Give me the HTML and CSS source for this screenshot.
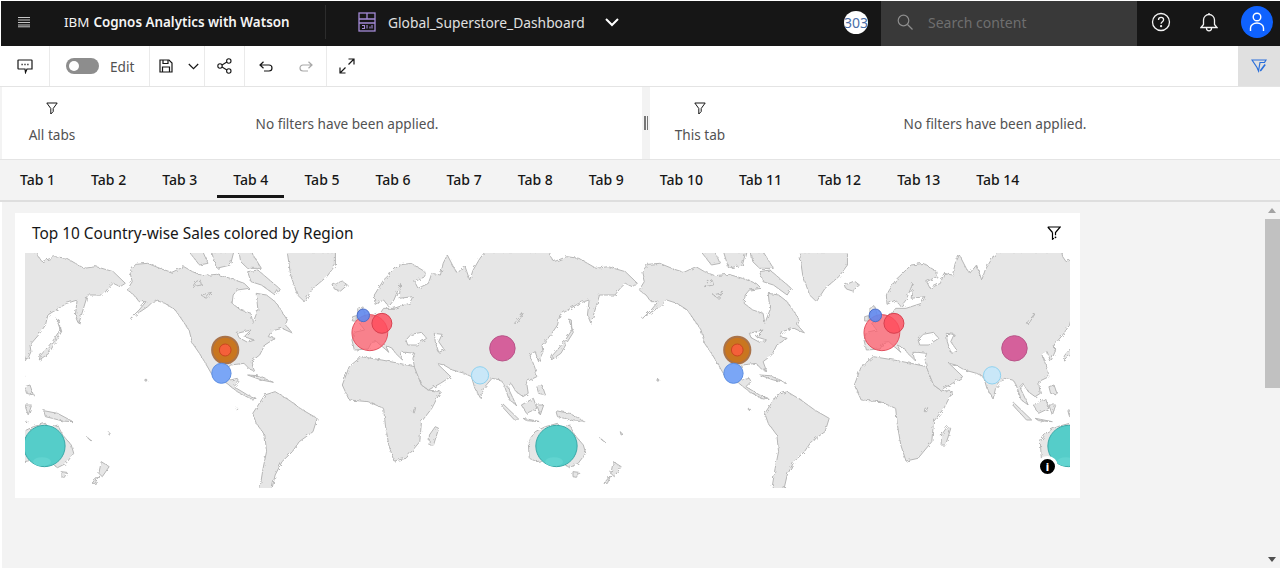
FILE: index.html
```html
<!DOCTYPE html>
<html lang="en">
<head>
  <meta charset="UTF-8" />
  <title>IBM Cognos Analytics with Watson</title>
  <link rel="stylesheet" href="styles.css">
</head>
<body>
  <header class="topbar">
    <button class="top-btn menu-btn" aria-label="Menu">
      <svg width="14" height="12" viewBox="0 0 14 12"><path d="M1 1.500h12M1 4h12M1 6.500h12M1 9h12M1 10.800h12" stroke="#c6c6c6" stroke-width="1"/></svg>
    </button>
    <div class="app-title">IBM <strong>Cognos Analytics with Watson</strong></div>
    <div class="switcher">
      <svg width="18" height="20" viewBox="0 0 18 20" fill="none" stroke="#a48ad6" stroke-width="1.300"><rect x="1" y="1" width="16" height="18"/><path d="M1 7h16M9 1v6M1 11h16"/><path d="M4 16.500h2.500v-3H4M9 13v3.500M12 16.500v-2M14 16.500v-3.500" stroke-width="1.100"/></svg>
      <span class="switcher-name">Global_Superstore_Dashboard</span>
      <svg class="switcher-chevron" width="14" height="9" viewBox="0 0 14 9" fill="none" stroke="#fff" stroke-width="2"><path d="M1 1l6 6 6-6"/></svg>
    </div>
    <div class="top-right">
      <div class="badge"><span>303</span></div>
      <div class="search">
        <svg width="16" height="16" viewBox="0 0 16 16" fill="none" stroke="#8d8d8d" stroke-width="1.200"><circle cx="6.500" cy="6.500" r="5.300"/><path d="M10.500 10.500l5 5"/></svg>
        <span>Search content</span>
      </div>
      <button class="top-btn" aria-label="Help">
        <svg width="20" height="20" viewBox="0 0 20 20" fill="none" stroke="#f4f4f4" stroke-width="1.300"><circle cx="10" cy="10" r="8.500"/><path d="M7.500 8c0-1.600 1.100-2.600 2.600-2.600S12.600 6.400 12.600 7.800c0 1.800-2.500 2-2.500 4"/><circle cx="10.100" cy="14.200" r=".5"/></svg>
      </button>
      <button class="top-btn" aria-label="Notifications">
        <svg width="18" height="20" viewBox="0 0 18 20" fill="none" stroke="#f4f4f4" stroke-width="1.300"><path d="M1 15.500l2.500-3V8a5.500 5.500 0 0 1 11 0v4.500l2.500 3z"/><path d="M6.500 15.500v.8a2.500 2.500 0 0 0 5 0v-.8M9 1v1.500"/></svg>
      </button>
      <div class="avatar-wrap">
        <div class="avatar">
          <svg width="16" height="20" viewBox="0 0 16 20" fill="none" stroke="#fff" stroke-width="1.400"><circle cx="8" cy="5" r="3.800"/><path d="M1.500 19v-3a6.500 5 0 0 1 13 0v3"/></svg>
        </div>
      </div>
    </div>
  </header>

  <nav class="toolbar">
    <div class="tool-group w-comment">
      <svg width="16" height="16" viewBox="0 0 16 16" fill="none" stroke="#161616" stroke-width="1.200"><path d="M1.500 2h13a.5.5 0 0 1 .5.500v8.500H10l-1.500 3.500L8 11H1.500a.5.5 0 0 1-.5-.5v-8a.5.5 0 0 1 .5-.5z"/><path d="M4.500 6.500h1.200M7.400 6.500h1.200M10.300 6.500h1.200" stroke-width="1.600"/></svg>
    </div>
    <div class="tool-group w-edit">
      <span class="toggle"><span class="knob"></span></span>
      <span class="edit-label">Edit</span>
    </div>
    <div class="tool-group w-save">
      <svg width="14" height="14" viewBox="0 0 14 14" fill="none" stroke="#161616" stroke-width="1.200"><path d="M1 1h9l3 3v9H1z"/><path d="M4 1v3.500h5V1M3.500 13V8h7v5"/></svg>
      <svg width="11" height="7" viewBox="0 0 11 7" fill="none" stroke="#161616" stroke-width="1.200"><path d="M.8 1l4.700 4.700L10.200 1"/></svg>
    </div>
    <div class="tool-group w-share">
      <svg width="15" height="16" viewBox="0 0 15 16" fill="none" stroke="#161616" stroke-width="1.100"><circle cx="11.800" cy="3" r="2.200"/><circle cx="3" cy="8" r="2.200"/><circle cx="11.800" cy="13" r="2.200"/><path d="M5 7l4.900-3M5 9l4.900 3"/></svg>
    </div>
    <div class="tool-group w-history">
      <svg width="14" height="11" viewBox="0 0 14 11" fill="none" stroke="#161616" stroke-width="1.200"><path d="M4.500 .8L1 4l3.500 3.200M1 4h9a3 3 0 0 1 0 6H5"/></svg>
      <svg width="14" height="11" viewBox="0 0 14 11" fill="none" stroke="#a8a8a8" stroke-width="1.200"><path d="M9.500 .8L13 4 9.500 7.200M13 4H4a3 3 0 0 0 0 6h5"/></svg>
    </div>
    <div class="tool-group w-expand">
      <svg width="16" height="16" viewBox="0 0 16 16" fill="none" stroke="#161616" stroke-width="1.200"><path d="M9.500 1H15v5.500M15 1L9.500 6.500M6.500 15H1V9.500M1 15l5.500-5.500"/></svg>
    </div>
    <div class="filter-toggle">
      <svg width="16" height="16" viewBox="0 0 16 16" fill="none" stroke="#2a6fdb" stroke-width="1.200"><path d="M1 2h14l-1.500 2.500H9L7.500 13 6 9.500z"/><path d="M9 12l4.500-6 1.300 1-4.500 6-1.800.6z" fill="#2a6fdb" stroke="none"/></svg>
    </div>
  </nav>

  <section class="filters">
    <div class="filter-panel panel-left">
      <div class="filter-scope">
        <svg width="12" height="13" viewBox="0 0 12 13" fill="none" stroke="#161616"><path d="M.8 1h10.400L7.200 6.500v3L4.800 12V6.500z"/></svg>
        <span>All tabs</span>
      </div>
      <p class="filter-msg">No filters have been applied.</p>
    </div>
    <div class="splitter"><span></span></div>
    <div class="filter-panel panel-right">
      <div class="filter-scope">
        <svg width="12" height="13" viewBox="0 0 12 13" fill="none" stroke="#161616"><path d="M.8 1h10.400L7.200 6.500v3L4.800 12V6.500z"/></svg>
        <span>This tab</span>
      </div>
      <p class="filter-msg">No filters have been applied.</p>
    </div>
  </section>

  <div class="tabs">
    <a class="tab">Tab 1</a>
    <a class="tab">Tab 2</a>
    <a class="tab">Tab 3</a>
    <a class="tab active">Tab 4</a>
    <a class="tab">Tab 5</a>
    <a class="tab">Tab 6</a>
    <a class="tab">Tab 7</a>
    <a class="tab">Tab 8</a>
    <a class="tab">Tab 9</a>
    <a class="tab">Tab 10</a>
    <a class="tab">Tab 11</a>
    <a class="tab">Tab 12</a>
    <a class="tab">Tab 13</a>
    <a class="tab">Tab 14</a>
  </div>

  <main class="board">
    <div class="canvas">
      <article class="widget">
        <div class="widget-head">
          <h2>Top 10 Country-wise Sales colored by Region</h2>
          <svg width="14" height="14" viewBox="0 0 14 14" fill="none" stroke="#000" stroke-width="1.200"><path d="M.8 1h12.400L8.500 6.500v2.800M5.500 6.500L.8 1M5.500 6.500v6.700l1.500-1"/><circle cx="8.500" cy="11.300" r=".9" fill="#000" stroke="none"/></svg>
        </div>
        <div class="map">
          <svg class="map-svg" viewBox="43.600 24 3034.700 705" preserveAspectRatio="none">
            <defs>
              <filter id="rough" x="-2%" y="-2%" width="104%" height="104%">
                <feTurbulence type="fractalNoise" baseFrequency=".09" numOctaves="3" seed="4"/>
                <feDisplacementMap in="SourceGraphic" scale="11"/>
              </filter>
              <g id="land">
                <!-- North America -->
                <path d="M348,80 L365,58 L400,55 L440,72 L470,82 L505,65 L530,80 L560,92 L600,88 L640,100 L680,115 L695,130 L660,135 L648,150 L645,175 L670,195 L700,205 L705,235 L720,195 L715,145 L745,150 L770,170 L790,200 L805,225 L800,240 L820,264 L790,250 L760,258 L750,275 L770,280 L740,300 L725,330 L700,350 L710,378 L695,372 L680,355 L640,360 L625,380 L640,405 L660,400 L665,410 L650,425 L690,450 L715,460 L700,462 L660,440 L630,415 L590,395 L565,350 L550,325 L530,295 L520,255 L500,225 L480,195 L450,175 L420,165 L400,185 L350,220 L375,195 L395,170 L375,170 L360,150 L340,135 L355,110 Z"/>
                <path d="M520,20 L560,20 L575,55 L550,60 Z M585,20 L650,20 L640,60 L600,70 Z M665,20 L700,20 L730,70 L690,70 L670,50 Z M540,110 L552,104 L556,120 L530,125 Z M690,80 L720,75 L782,130 L770,150 L730,120 L700,110 Z M555,150 L585,142 L570,160 Z"/>
                <path d="M690,390 L720,392 L765,412 L730,405 Z"/>
                <!-- Greenland, Iceland -->
                <path d="M805,20 L945,20 L945,60 L920,95 L880,130 L855,170 L835,150 L815,90 Z"/>
                <path d="M938,120 L965,108 L980,120 L960,138 L942,132 Z"/>
                <!-- South America -->
                <path d="M705,505 L740,450 L770,440 L810,465 L850,495 L892,520 L880,560 L840,590 L820,620 L790,650 L770,690 L760,735 L725,735 L735,670 L745,620 L740,570 L715,535 Z"/>
                <!-- Africa -->
                <path d="M965,420 L985,365 L1020,335 L1080,345 L1130,355 L1175,365 L1195,420 L1215,435 L1250,440 L1225,490 L1195,530 L1190,590 L1150,640 L1115,648 L1100,600 L1090,540 L1085,490 L1040,470 L985,465 Z"/>
                <path d="M1235,545 L1245,550 L1230,600 L1217,600 L1218,570 Z"/>
                <!-- Eurasia, runs past the seam of the repeat -->
                <path d="M1000,315 L993,285 L1000,262 L1030,255 L1015,235 L1050,215 L1075,205 L1085,190 L1115,190 L1160,175 L1170,155 L1130,160 L1135,115 L1115,165 L1100,185 L1085,165 L1060,178 L1058,150 L1085,105 L1130,60 L1165,55 L1205,80 L1205,95 L1175,110 L1185,130 L1215,115 L1225,85 L1250,90 L1258,55 L1270,30 L1290,70 L1300,85 L1320,60 L1335,105 L1345,75 L1365,40 L1380,20 L1567,20 L1570,35 L1580,50 L1617,35 L1652,40 L1677,55 L1702,70 L1737,65 L1787,80 L1822,115 L1807,125 L1787,115 L1772,130 L1757,150 L1712,150 L1702,185 L1687,235 L1677,210 L1682,165 L1652,175 L1612,200 L1597,210 L1590,240 L1570,270 L1545,300 L1548,320 L1535,350 L1525,320 L1510,330 L1525,370 L1530,395 L1500,410 L1505,445 L1490,455 L1470,440 L1455,415 L1445,425 L1470,480 L1450,465 L1435,420 L1425,405 L1400,400 L1375,430 L1368,462 L1350,430 L1340,395 L1320,385 L1285,375 L1260,360 L1240,355 L1280,395 L1250,415 L1215,435 L1195,420 L1175,368 L1170,340 L1175,325 L1150,322 L1135,322 L1140,345 L1120,325 L1110,310 L1090,300 L1100,322 L1065,290 L1050,292 L1040,312 Z"/>
                <!-- Japan and the Islands -->
                <path d="M1622,222 L1630,225 L1632,255 L1610,290 L1575,332 L1572,345 L1600,325 L1622,285 L1636,262 Z"/>
                <path d="M1010,190 L1025,185 L1035,225 L1010,225 Z M995,215 L1006,212 L1005,228 L995,228 Z"/>
                <path d="M1530,425 L1545,420 L1555,450 L1535,445 Z M1485,480 L1520,460 L1530,490 L1500,505 Z M1430,475 L1480,525 L1465,525 L1425,480 Z M1490,520 L1540,530 L1500,527 Z M1530,480 L1550,480 L1540,510 Z"/>
                <!-- Oceania -->
                <path d="M1505,590 L1525,560 L1555,545 L1590,535 L1600,550 L1625,540 L1640,570 L1665,600 L1672,625 L1650,655 L1625,668 L1600,650 L1570,640 L1530,650 L1508,640 Z"/>
                <path d="M1585,497 L1625,505 L1670,530 L1640,528 L1610,520 L1590,515 Z M1635,680 L1652,682 L1645,697 L1635,695 Z"/>
                <path d="M1752,650 L1775,665 L1755,695 L1745,685 Z M1745,690 L1735,715 L1725,715 Z"/>
                <path d="M392,403 h5 v5 h-5 Z M657,490 h4 v4 h-4 Z M1712,578 L1727,590 L1720,586 Z M1772,560 L1780,568 L1775,570 Z"/>
                <!-- Inland water -->
                <path class="water" d="M1150,285 L1165,268 L1195,262 L1210,280 L1180,300 L1155,300 Z M1232,265 L1255,268 L1245,290 L1262,315 L1245,322 L1235,290 Z M1465,235 L1490,205 L1485,215 L1472,235 Z M660,265 L700,255 L680,275 L710,285 L690,292 L665,278 Z M1170,490 L1178,488 L1175,500 L1168,500 Z"/>
              </g>
              <g id="bubbles">
                <ellipse cx="1587" cy="603" rx="60" ry="62" fill="#55cdc9" stroke="#3aa9a8"/>
                <ellipse cx="1580" cy="650" rx="26" ry="13" fill="#62d4d0"/>
                <ellipse cx="625" cy="315" rx="38" ry="40" fill="#c9761f" stroke="#a9734a" stroke-width="2"/>
                <ellipse cx="625" cy="315" rx="17" ry="18" fill="#f4603a" stroke="#c9461f"/>
                <ellipse cx="614" cy="385" rx="28" ry="30" fill="#7aa6f6" stroke="#5c8ee2"/>
                <ellipse cx="1045" cy="263" rx="52" ry="54" fill="#ff5a6a" fill-opacity=".72" stroke="#e2505f"/>
                <ellipse cx="1080" cy="235" rx="29" ry="30" fill="#ff4a5a" fill-opacity=".8" stroke="#d8404f"/>
                <ellipse cx="1026" cy="211" rx="18" ry="19" fill="#6088ee" fill-opacity=".9" stroke="#4d6fc8"/>
                <ellipse cx="1430" cy="310" rx="37" ry="38" fill="#d5609b" stroke="#b85488"/>
                <ellipse cx="1365" cy="391" rx="25" ry="26" fill="#c9e7f8" stroke="#8fd2f0"/>
              </g>
            </defs>
            <g class="land" filter="url(#rough)">
              <use href="#land" x="-1487"/>
              <use href="#land"/>
              <use href="#land" x="1487"/>
            </g>
            <g>
              <use href="#bubbles" x="-1487"/>
              <use href="#bubbles"/>
              <use href="#bubbles" x="1487"/>
            </g>
          </svg>
          <span class="info-dot"><span>i</span></span>
        </div>
      </article>
    </div>
    <div class="scrollbar">
      <span class="arrow-up"></span>
      <span class="thumb"></span>
      <span class="arrow-down"></span>
    </div>
  </main>
</body>
</html>
```

FILE: styles.css
```css
* {
  box-sizing: border-box;
  font-family: 'Noto Sans', 'Open Sans', sans-serif;
}

html, body {
  margin: 0;
  padding: 0;
  height: 568px;
  overflow: hidden;
  background: #fff;
}

button {
  border: none;
  background: none;
  padding: 0;
}

/* top bar */
.topbar {
  display: flex;
  align-items: center;
  height: 45px;
  margin: 1px 0 0 1px;
  background: #161616;
  color: #f4f4f4;
  font-size: 14px;
}

.top-btn {
  display: flex;
  align-items: center;
  justify-content: center;
  width: 48px;
  height: 45px;
  padding-bottom: 3px;
}

.menu-btn {
  width: 45px;
}

.app-title {
  display: flex;
  align-items: center;
  gap: 4px;
  width: 280px;
  height: 34px;
  margin-bottom: 3px;
  padding-left: 18px;
  border-right: 1px solid #2c2c2c;
  font-size: 13.400px;
  white-space: nowrap;
}

.app-title strong {
  font-weight: 600;
}

.switcher {
  display: flex;
  align-items: center;
  margin-bottom: 3px;
  padding-left: 32px;
}

.switcher-name {
  margin-left: 12px;
  color: #e0e0e0;
  font-size: 13.800px;
}

.switcher-chevron {
  margin-left: 20px;
}

.top-right {
  display: flex;
  align-items: center;
  margin-left: auto;
}

.badge {
  display: flex;
  justify-content: center;
  align-items: center;
  width: 24px;
  height: 23px;
  margin-right: 13px;
  margin-bottom: 3px;
  border-radius: 50%;
  background: #fff;
  overflow: hidden;
  color: #4a6ea8;
  font-size: 14px;
}

.search {
  display: flex;
  align-items: center;
  gap: 15px;
  width: 256px;
  height: 45px;
  padding: 0 0 3px 16px;
  background: #393939;
  color: #6f6f6f;
  font-size: 14px;
}

.avatar-wrap {
  display: flex;
  justify-content: center;
  width: 47px;
  margin-bottom: 3px;
}

.avatar {
  display: flex;
  align-items: center;
  justify-content: center;
  width: 32px;
  height: 32px;
  border-radius: 50%;
  background: #0f62fe;
}

/* toolbar */
.toolbar {
  display: flex;
  height: 41px;
  background: #fff;
  border-bottom: 1px solid #e4e4e4;
}

.tool-group {
  display: flex;
  align-items: center;
  justify-content: center;
  height: 100%;
  border-right: 1px solid #eaeaea;
}

.w-comment { width: 50px; }
.w-edit { width: 100px; justify-content: flex-start; padding-left: 16px; }
.w-save { width: 55px; gap: 15px; padding-left: 3px; }
.w-share { width: 40px; }
.w-history { width: 82px; gap: 26px; }
.w-expand { width: 40px; border-right: none; }

.toggle {
  display: block;
  width: 33px;
  height: 16px;
  padding: 3px;
  border-radius: 8px;
  background: #8d8d8d;
}

.knob {
  display: block;
  width: 10px;
  height: 10px;
  border-radius: 50%;
  background: #fff;
}

.edit-label {
  margin-left: 11px;
  color: #525252;
  font-size: 13.600px;
}

.filter-toggle {
  display: flex;
  align-items: center;
  justify-content: center;
  width: 42px;
  margin-left: auto;
  background: #e0e0e0;
}

/* filter strip */
.filters {
  display: flex;
  height: 73px;
  padding-left: 2px;
  border-bottom: 1px solid #e4e4e4;
  background: #f3f3f3;
}

.filter-panel {
  display: flex;
  background: #fff;
}

.panel-left {
  width: 640px;
}

.panel-right {
  flex: 1;
}

.filter-scope {
  display: flex;
  flex-direction: column;
  align-items: center;
  gap: 10px;
  width: 100px;
  padding-top: 15px;
  color: #525252;
  font-size: 13.600px;
}

.filter-msg {
  width: 490px;
  margin: 27px 0 0;
  text-align: center;
  color: #525252;
  font-size: 13.600px;
}

.splitter {
  display: flex;
  align-items: center;
  justify-content: center;
  width: 8px;
}

.splitter span {
  display: block;
  width: 4px;
  height: 14px;
  border-left: 2px solid #777;
  border-right: 1px solid #777;
}

/* tabs */
.tabs {
  display: flex;
  height: 42px;
  padding-left: 2px;
  background: #f3f3f3;
  border-bottom: 2px solid #dedede;
}

.tab {
  height: 38px;
  margin: 0 2px;
  padding: 10px 16px 0;
  color: #161616;
  font-size: 14px;
  font-weight: 500;
}

.tab.active {
  border-bottom: 3px solid #161616;
}

/* board */
.board {
  display: flex;
  height: 366px;
  margin-left: 2px;
  background: #f3f3f3;
}

.canvas {
  flex: 1;
  padding: 11px 13px;
}

.widget {
  width: 1065px;
  height: 285px;
  background: #fff;
}

.widget-head {
  display: flex;
  justify-content: space-between;
  align-items: center;
  height: 40px;
  padding: 0 19px 0 17px;
}

.widget-head h2 {
  margin: 0;
  color: #161616;
  font-size: 15.400px;
  font-weight: 400;
}

.map {
  position: relative;
  width: 1045px;
  height: 235px;
  margin-left: 10px;
}

.map-svg {
  display: block;
  width: 1045px;
  height: 235px;
}

.land {
  fill: #e6e6e6;
  stroke: #b6b6b6;
  stroke-width: 1;
}

#land path,
#bubbles ellipse {
  vector-effect: non-scaling-stroke;
}

#land .water {
  fill: #fff;
}

.info-dot {
  position: absolute;
  left: 1012px;
  top: 203px;
  display: flex;
  align-items: center;
  justify-content: center;
  width: 21px;
  height: 21px;
  border: 3px solid #fff;
  border-radius: 50%;
  background: #000;
}

.info-dot span {
  color: #fff;
  font-size: 11px;
  font-weight: 800;
  line-height: 1;
}

/* scrollbar */
.scrollbar {
  display: flex;
  flex-direction: column;
  align-items: center;
  width: 16px;
  height: 100%;
  padding-top: 6px;
}

.arrow-up {
  width: 0;
  height: 0;
  border: 4px solid transparent;
  border-top: none;
  border-bottom: 5px solid #a3a3a3;
}

.thumb {
  width: 15px;
  height: 169px;
  margin-top: 6px;
  background: #c1c1c1;
}

.arrow-down {
  width: 0;
  height: 0;
  margin-top: auto;
  margin-bottom: 6px;
  border: 4px solid transparent;
  border-bottom: none;
  border-top: 5px solid #505050;
}
```
